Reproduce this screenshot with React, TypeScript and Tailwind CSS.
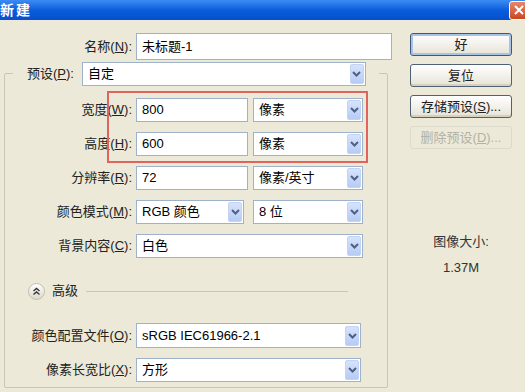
import { ReactNode } from 'react'

function Chevron() {
  return (
    <svg width="9" height="6" viewBox="0 0 9 6">
      <path d="M1 1 L4.5 4.5 L8 1" fill="none" stroke="#4d6185" strokeWidth="2" />
    </svg>
  )
}

function Select({ className = '', value }: { className?: string; value: string }) {
  return (
    <div className={`h-[24px] border border-[#9eb3cb] bg-white flex items-center ${className}`}>
      <span className="flex-1 pl-[5px] whitespace-nowrap">{value}</span>
      <div className="w-[14px] h-[20px] mr-[1px] rounded-[2px] bg-gradient-to-b from-[#d7e3fb] to-[#b6cbf5] border border-[#c3d3f3] flex items-center justify-center">
        <Chevron />
      </div>
    </div>
  )
}

function Input({ className = '', value }: { className?: string; value: string }) {
  return (
    <div className={`h-[24px] border border-[#9eb3cb] bg-white flex items-center pl-[5px] ${className}`}>
      {value}
    </div>
  )
}

function Label({ children, k, className = 'w-[131px]' }: { children: ReactNode; k: string; className?: string }) {
  return (
    <span className={`text-right whitespace-nowrap pr-[4px] text-[#222] ${className}`}>
      {children}(<u>{k}</u>):
    </span>
  )
}

function Button({ children, primary = false, disabled = false }: { children: ReactNode; primary?: boolean; disabled?: boolean }) {
  return (
    <div
      className={`w-[102px] h-[23px] rounded-[3px] flex items-center justify-center whitespace-nowrap ${
        disabled
          ? 'border border-[#dcdacb] text-[#b5b2a4]'
          : primary
          ? 'border border-[#3f5a78] bg-gradient-to-b from-white to-[#e6e3d6] shadow-[inset_0_0_0_2px_#a9c2e8] text-[#222]'
          : 'border border-[#4f6275] bg-gradient-to-b from-white to-[#e6e3d6] shadow-[inset_0_-2px_0_#d6d0bd] text-[#222]'
      }`}
    >
      {children}
    </div>
  )
}

export default function App() {
  return (
    <div className="relative w-[525px] h-[392px] overflow-hidden bg-[#ece9d8] text-[13px] font-['Liberation_Sans','Noto_Sans_CJK_SC',sans-serif]">
      {/* Title bar */}
      <div className="h-[20px] flex items-center justify-between bg-gradient-to-b from-[#3c8cf4] via-[#0a5ddc] to-[#0650cc]">
        <span className="ml-0 text-white font-bold text-[14px] tracking-[2px]">新建</span>
        <div className="w-[20px] h-[19px] mr-[-4px] rounded-[3px] border border-white bg-gradient-to-b from-[#e8866a] to-[#c9451f] flex items-center justify-center">
          <svg width="10" height="10" viewBox="0 0 10 10">
            <path d="M1 1 L9 9 M9 1 L1 9" stroke="white" strokeWidth="2" />
          </svg>
        </div>
      </div>

      <div className="flex pt-[13px]">
        {/* Left column */}
        <div className="w-[395px]">
          <div className="flex items-center">
            <Label k="N" className="w-[136px]">名称</Label>
            <Input className="w-[256px] h-[27px]" value="未标题-1" />
          </div>

          <div className="mt-[13px] ml-[4px] w-[384px] h-[315px] border border-[#c9c6b6] rounded-[2px]">
            {/* Preset */}
            <div className="-mt-[12px] ml-[8px] w-[366px] bg-[#ece9d8] flex items-center pl-[14px]">
              <Label k="P" className="">预设</Label>
              <Select className="ml-[4px] w-[284px]" value="自定" />
            </div>

            <div className="mt-[12px] flex flex-col gap-[10px]">
              <div className="flex items-center">
                <Label k="W">宽度</Label>
                <Input className="w-[112px]" value="800" />
                <Select className="ml-[5px] w-[110px]" value="像素" />
              </div>
              <div className="flex items-center">
                <Label k="H">高度</Label>
                <Input className="w-[112px]" value="600" />
                <Select className="ml-[5px] w-[110px]" value="像素" />
              </div>
              <div className="flex items-center">
                <Label k="R">分辨率</Label>
                <Input className="w-[112px]" value="72" />
                <Select className="ml-[5px] w-[110px]" value="像素/英寸" />
              </div>
              <div className="flex items-center">
                <Label k="M">颜色模式</Label>
                <Select className="w-[108px]" value="RGB 颜色" />
                <Select className="ml-[9px] w-[110px]" value="8 位" />
              </div>
              <div className="flex items-center">
                <Label k="C">背景内容</Label>
                <Select className="w-[227px]" value="白色" />
              </div>
            </div>

            {/* Advanced */}
            <div className="mt-[24px] h-[18px] flex items-center pl-[23px]">
              <div className="w-[17px] h-[17px] rounded-full border border-[#c2bfb0] bg-gradient-to-b from-white to-[#dcd9ca] flex items-center justify-center">
                <svg width="9" height="9" viewBox="0 0 9 9">
                  <path d="M1.5 4 L4.5 1.5 L7.5 4 M1.5 7.5 L4.5 5 L7.5 7.5" fill="none" stroke="#333" strokeWidth="1.4" />
                </svg>
              </div>
              <span className="ml-[7px] text-[#222]">高级</span>
              <div className="ml-[8px] w-[262px] h-px bg-[#c9c6b6]" />
            </div>

            <div className="mt-[23px] flex flex-col gap-[10px]">
              <div className="flex items-center">
                <Label k="O">颜色配置文件</Label>
                <Select className="w-[225px] h-[25px]" value="sRGB IEC61966-2.1" />
              </div>
              <div className="flex items-center">
                <Label k="X">像素长宽比</Label>
                <Select className="w-[225px]" value="方形" />
              </div>
            </div>
          </div>
        </div>

        {/* Right column */}
        <div className="flex-1 pl-[15px]">
          <div className="flex flex-col gap-[8px]">
            <Button primary>好</Button>
            <Button>复位</Button>
            <Button>
              存储预设(<u>S</u>)...
            </Button>
            <Button disabled>
              删除预设(<u>D</u>)...
            </Button>
          </div>
          <div className="mt-[83px] w-[102px] flex flex-col items-center gap-[6px] text-[#333]">
            <span>图像大小:</span>
            <span>1.37M</span>
          </div>
        </div>
      </div>

      {/* Red annotation box */}
      <div className="absolute left-[107px] top-[91px] w-[261px] h-[72px] border-2 border-[#e0645e]" />
    </div>
  )
}
